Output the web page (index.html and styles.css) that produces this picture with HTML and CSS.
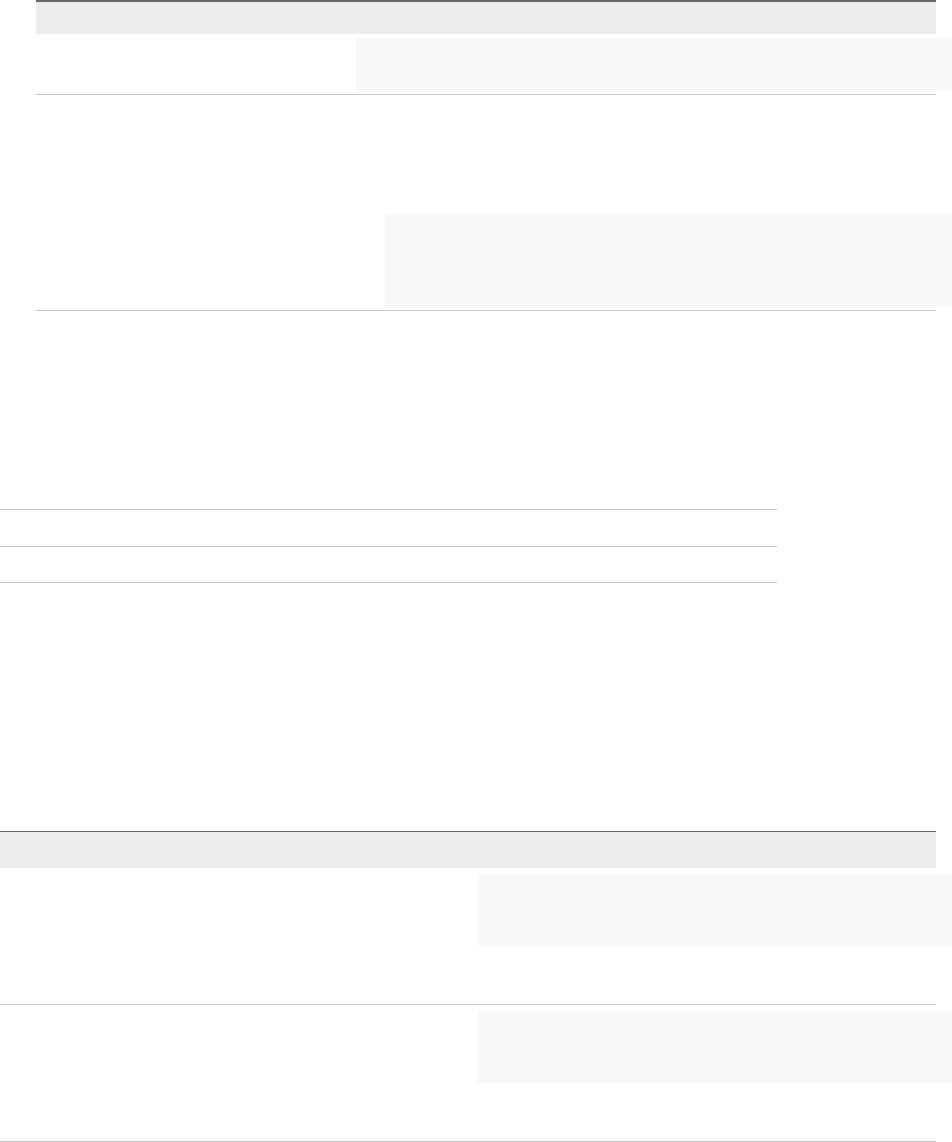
FILE: index.html
```html
<!DOCTYPE html>
<html lang="en">
<head>
<meta charset="utf-8">
<title>Tables</title>
<link rel="stylesheet" href="styles.css">
</head>
<body>
<div class="page">
  <section class="table t1">
    <div class="thead"></div>
    <div class="row r1">
      <div class="cell"></div>
      <div class="cell"><pre class="code c1"></pre></div>
    </div>
    <div class="row r2">
      <div class="cell"></div>
      <div class="cell"><pre class="code c2"></pre></div>
    </div>
  </section>

  <section class="table t2">
    <div class="row s1"></div>
    <div class="row s2"></div>
  </section>

  <section class="table t3">
    <div class="thead"></div>
    <div class="row r3">
      <div class="cell"></div>
      <div class="cell"><pre class="code c3"></pre></div>
    </div>
    <div class="row r3">
      <div class="cell"></div>
      <div class="cell"><pre class="code c3"></pre></div>
    </div>
  </section>
</div>
</body>
</html>
```

FILE: styles.css
```css
html, body {
  margin: 0;
  padding: 0;
  background: #ffffff;
  overflow-x: hidden;
}

body {
  font-family: "Liberation Sans", Arial, sans-serif;
  color: #333;
}

.page {
  display: flex;
  flex-direction: column;
  align-items: flex-start;
}

.table {
  display: flex;
  flex-direction: column;
}

.thead {
  background: #ececec;
}

.row {
  display: grid;
  border-bottom: 1px solid #c8c8c8;
  box-sizing: border-box;
}

.cell {
  min-width: 0;
}

.code {
  margin: 0;
  background: #f8f8f8;
  font-family: "Liberation Mono", monospace;
}

/* table 1 */
.t1 {
  margin-left: 36px;
  width: 900px;
}
.t1 .thead {
  height: 32px;
  border-top: 2px solid #666666;
}
.t1 .r1 {
  grid-template-columns: 320px 1fr;
  height: 61px;
}
.c1 {
  margin-top: 4px;
  height: 52px;
  width: 596px;
}
.t1 .r2 {
  grid-template-columns: 349px 1fr;
  height: 216px;
}
.c2 {
  margin-top: 119px;
  height: 92px;
  width: 567px;
}

/* table 2: plain rule rows */
.t2 {
  margin-top: 198px;
  width: 777px;
  border-top: 1px solid #c8c8c8;
}
.t2 .s1 {
  height: 37px;
}
.t2 .s2 {
  height: 36px;
}

/* table 3 */
.t3 {
  margin-top: 248px;
  width: 936px;
}
.t3 .thead {
  height: 36px;
  border-top: 1px solid #666666;
}
.t3 .r3 {
  grid-template-columns: 478px 1fr;
  height: 137px;
}
.c3 {
  margin-top: 6px;
  height: 72px;
  width: 474px;
}
```
